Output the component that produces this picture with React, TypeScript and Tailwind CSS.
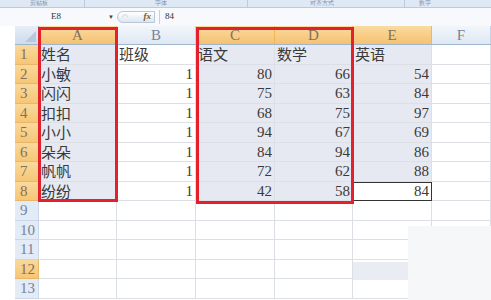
import React from "react";

const cols = ["A", "B", "C", "D", "E", "F"];
const colW = ["w-[78px]", "w-[79px]", "w-[79px]", "w-[78px]", "w-[79px]", "flex-1"];

const data: (string | number)[][] = [
  ["姓名", "班级", "语文", "数学", "英语"],
  ["小敏", 1, 80, 66, 54],
  ["闪闪", 1, 75, 63, 84],
  ["扣扣", 1, 68, 75, 97],
  ["小小", 1, 94, 67, 69],
  ["朵朵", 1, 84, 94, 86],
  ["帆帆", 1, 72, 62, 88],
  ["纷纷", 1, 42, 58, 84],
];

const selCols = ["A", "C", "D", "E"];

const isHi = (r: number, c: number) => {
  if (r > 8) return false;
  if (c === 0 || c === 2 || c === 3) return true;
  if (c === 4 && r < 8) return true;
  return false;
};

const Ribbon = () => (
  <div className="h-[8px] flex items-center bg-[#dfe9f5] border-b border-[#b9cbe0] text-[6px] leading-[7px] text-[#7b90ac]">
    <div className="w-[85px] pl-[30px] border-r border-[#b9cbe0]">剪贴板</div>
    <div className="w-[163px] pl-[70px] border-r border-[#b9cbe0]">字体</div>
    <div className="w-[157px] pl-[62px] border-r border-[#b9cbe0]">对齐方式</div>
    <div className="flex-1 pl-[14px]">数字</div>
  </div>
);

const FormulaBar = () => (
  <div className="h-[18px] flex items-center bg-[#f7f9fc] text-[9px] text-[#333]" style={{ fontFamily: '"Liberation Serif", serif' }}>
    <div className="w-[108px] pl-[51px]">E8</div>
    <div className="w-[9px] text-[6px] text-[#444]">▼</div>
    <div className="w-[38px] h-[12px] rounded-l-full border border-[#b8c6d8] bg-gradient-to-b from-[#ffffff] to-[#dde6f1] flex items-center">
      <span className="ml-[4px] text-[7px] text-[#9aa9bb]">◠</span>
      <span className="ml-auto mr-[3px] text-[9px] italic font-bold text-[#6b5a2f]">fx</span>
    </div>
    <div className="ml-[4px] h-[14px] w-px bg-[#c5d1df]" />
    <div className="ml-[5px]">84</div>
  </div>
);

const HeaderRow = () => (
  <div className="flex h-[19px] border-b border-[#9eb6ce]">
    <div className="w-[24px] relative bg-gradient-to-b from-[#e6edf7] to-[#cfdcec] border-r border-[#9eb6ce]">
      <div className="absolute right-[2px] bottom-[2px] w-0 h-0 border-l-[11px] border-l-transparent border-b-[11px] border-b-[#b6c8de]" />
    </div>
    {cols.map((c, i) => {
      const sel = selCols.includes(c);
      return (
        <div
          key={c}
          className={`${colW[i]} flex items-center justify-center border-r text-[15px] ${
            sel
              ? "bg-gradient-to-b from-[#f9dba0] to-[#f6c170] border-[#f1b55a] text-[#85715a]"
              : "bg-gradient-to-b from-[#f2f6fb] to-[#dfe8f3] border-[#c5d4e6] text-[#76849a]"
          }`}
        >
          {c}
        </div>
      );
    })}
  </div>
);

const Row = ({ r }: { r: number }) => {
  const row = data[r - 1];
  const orange = r <= 8 || r === 12;
  return (
    <div className="flex h-[19.5px]">
      <div
        className={`w-[24px] flex items-center pl-[5px] text-[15px] border-r border-b ${
          orange
            ? "bg-gradient-to-b from-[#f9d99b] to-[#f6c676] border-[#e9b66a] text-[#85715a]"
            : "bg-[#e2ebf6] border-[#c9d7e8] text-[#76849a]"
        }`}
      >
        {r}
      </div>
      {cols.map((c, i) => {
        const v = row ? row[i] : undefined;
        const num = typeof v === "number";
        const active = r === 8 && c === "E";
        return (
          <div
            key={c}
            className={`${colW[i]} flex items-center border-r border-b border-[#dcdfe3] text-[15px] text-[#3a3a3a] ${
              num ? "justify-end pr-[2px]" : "pl-[2px]"
            } ${isHi(r, i) ? "bg-[#e6e9f2]" : "bg-white"} ${active ? "outline outline-[1.5px] outline-[#333] -outline-offset-1" : ""}`}
            style={{ fontFamily: num ? '"Liberation Serif", serif' : '"Noto Sans CJK SC", sans-serif' }}
          >
            {v}
          </div>
        );
      })}
    </div>
  );
};

export default function App() {
  return (
    <div className="w-[491px] h-[300px] overflow-hidden bg-white">
      <Ribbon />
      <FormulaBar />
      <div className="flex">
        <div className="w-[15px] bg-white" />
        <div className="flex-1 relative" style={{ fontFamily: '"Liberation Serif", serif' }}>
          <HeaderRow />
          {Array.from({ length: 13 }, (_, k) => (
            <Row key={k} r={k + 1} />
          ))}
          {/* red selection frames */}
          <div className="absolute left-[23px] top-[1px] w-[80px] h-[175px] border-[3px] border-[#e3202c]" />
          <div className="absolute left-[181px] top-[1px] w-[158px] h-[177px] border-[3px] border-[#e3202c]" />
          {/* faint watermark */}
          <div className="absolute left-[393px] top-[200px] w-[90px] h-[80px] bg-[#f6f7f9]" />
          <div className="absolute left-[338px] top-[236px] w-[55px] h-[18px] bg-[#e9ecf2]" />
        </div>
      </div>
    </div>
  );
}
